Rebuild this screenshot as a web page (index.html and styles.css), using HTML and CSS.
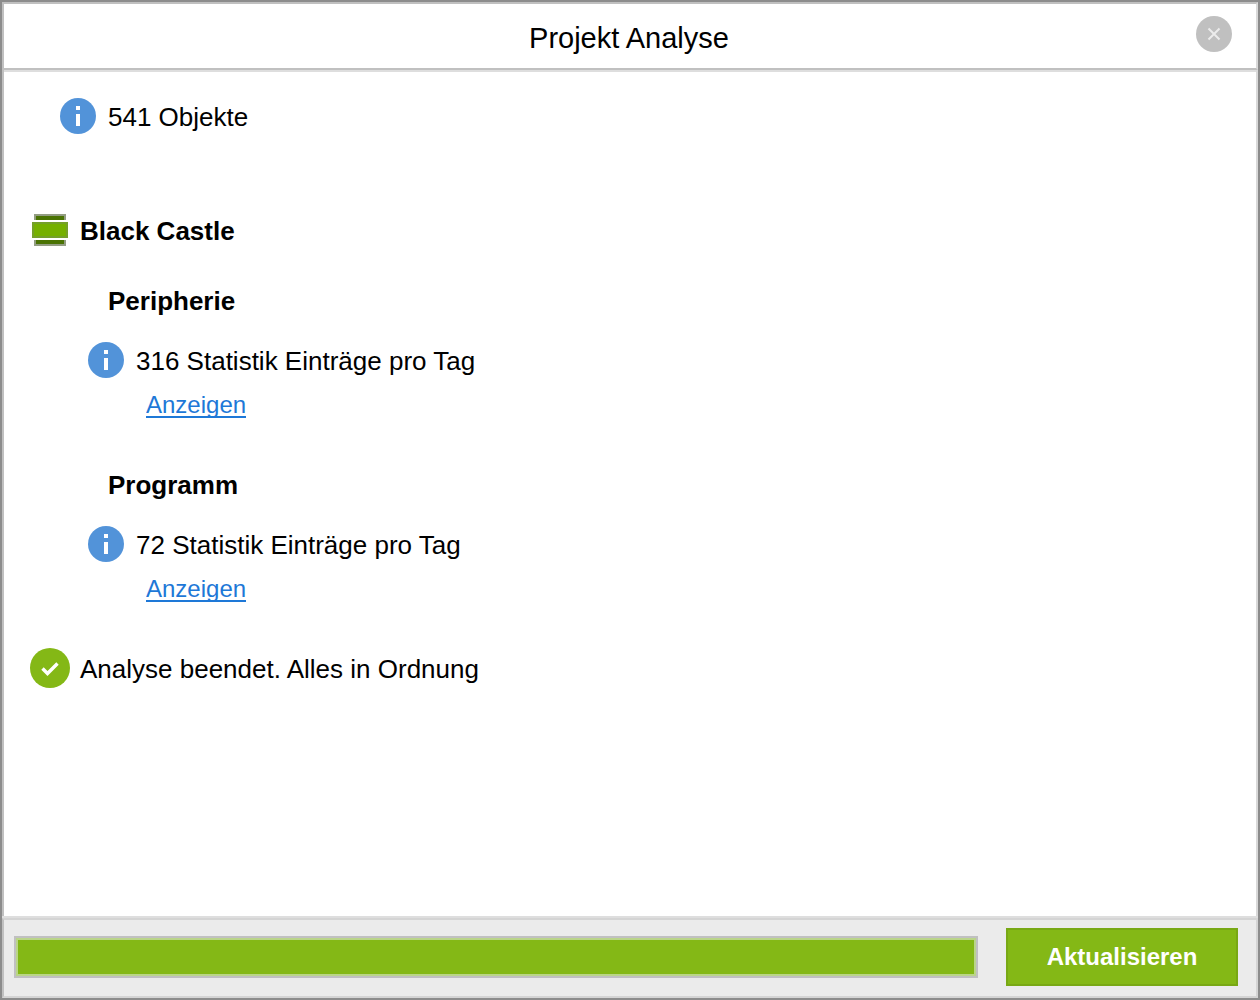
FILE: index.html
```html
<!DOCTYPE html>
<html lang="de">
<head>
    <meta charset="UTF-8">
    <meta name="viewport" content="width=device-width, initial-scale=1.0">
    <title>Projekt Analyse</title>
    <link rel="stylesheet" href="styles.css">
</head>
<body>
    <svg class="symbols" width="0" height="0" aria-hidden="true">
        <symbol id="info" viewBox="0 0 36 36">
            <circle cx="18" cy="18" r="18" fill="#5293d9"/>
            <path d="M16 8h4v4h-4zM16 16h4v12h-4z" fill="#fff"/>
        </symbol>
    </svg>

    <div class="window">
        <header class="titlebar">
            <h1>Projekt Analyse</h1>
            <button class="close" aria-label="Schließen">
                <svg width="36" height="36" viewBox="0 0 36 36">
                    <circle cx="18" cy="18" r="18" fill="#c0c0c0"/>
                    <path d="M12.5 12.5l11 11M23.5 12.5l-11 11" stroke="#ececec" stroke-width="2" fill="none"/>
                </svg>
            </button>
        </header>

        <main class="content">
            <p class="row total"><svg class="icon"><use href="#info"/></svg><span>541 Objekte</span></p>

            <h2 class="row project">
                <svg class="icon" viewBox="0 0 36 36">
                    <path d="M2 2h32v6H2zM2 28h32v6H2z" fill="#939d83"/>
                    <path d="M4 4h28v4H4zM4 28h28v4H4z" fill="#4a7303"/>
                    <path d="M0 10h36v16H0z" fill="#75a02a"/>
                    <path d="M2 12h32v12H2z" fill="#75b000"/>
                </svg>
                <span>Black Castle</span>
            </h2>

            <section class="group">
                <h3>Peripherie</h3>
                <p class="row"><svg class="icon"><use href="#info"/></svg><span>316 Statistik Einträge pro Tag</span></p>
                <a class="show" href="#">Anzeigen</a>
            </section>

            <section class="group">
                <h3>Programm</h3>
                <p class="row"><svg class="icon"><use href="#info"/></svg><span>72 Statistik Einträge pro Tag</span></p>
                <a class="show" href="#">Anzeigen</a>
            </section>

            <p class="row result">
                <svg class="icon-big" viewBox="0 0 40 40">
                    <circle cx="20" cy="20" r="20" fill="#84b816"/>
                    <path d="M12.5 20.5l5 5 10-10" stroke="#fff" stroke-width="3.4" fill="none"/>
                </svg>
                <span>Analyse beendet. Alles in Ordnung</span>
            </p>
        </main>

        <footer class="footer">
            <progress class="progress" value="100" max="100" aria-label="Fortschritt"></progress>
            <button class="refresh">Aktualisieren</button>
        </footer>
    </div>
</body>
</html>
```
FILE: styles.css
```css
* {
    box-sizing: border-box;
}
body {
    margin: 0;
    font-family: "Liberation Sans", Arial, sans-serif;
    font-size: 26px;
    line-height: 40px;
    color: #000;
    background-color: #fff;
}
h1, h2, h3, p {
    margin: 0;
    font-size: 26px;
}
.symbols {
    position: absolute;
}
.window {
    display: flex;
    flex-direction: column;
    min-height: 100vh;
    border: 2px solid #8c8c8c;
}
.titlebar {
    display: grid;
    grid-template-columns: 1fr auto 1fr;
    align-items: center;
    padding: 0 24px 4px 22px;
    height: 68px;
    border: 2px solid #c0c0c0;
    border-right-color: #d9d9d9;
    box-shadow: 0 2px 0 #dedede;
}
.titlebar h1 {
    grid-column: 2;
    padding-top: 8px;
    font-size: 29px;
    font-weight: normal;
}
.close {
    justify-self: end;
    width: 36px;
    height: 36px;
    padding: 0;
    border: none;
    background: none;
    cursor: pointer;
}
.close svg {
    display: block;
}
.content {
    flex: 1;
    padding: 25px 26px;
    border-left: 2px solid #c0c0c0;
    border-right: 2px solid #d9d9d9;
}
.row {
    display: flex;
    align-items: center;
    gap: 12px;
}
.row span {
    padding-top: 2px;
}
.icon {
    width: 36px;
    height: 36px;
}
.icon-big {
    width: 40px;
    height: 40px;
}
.total {
    margin: 0 0 72px 30px;
}
.project {
    margin: 0 0 28px 2px;
}
.group {
    margin: 0 0 45px 58px;
}
.group h3 {
    margin: 0 0 18px 20px;
    padding-top: 2px;
}
.show {
    display: block;
    width: fit-content;
    height: 28px;
    margin: 9px 0 0 58px;
    border-bottom: 2px solid #1e78d7;
    overflow: hidden;
    font-size: 24px;
    line-height: 30px;
    color: #1e78d7;
    text-decoration: none;
}
.result {
    gap: 10px;
}
.footer {
    display: flex;
    align-items: center;
    gap: 28px;
    padding: 8px 18px 10px 10px;
    background-color: #ebebeb;
    border: 2px solid #d4d4d4;
    border-left-color: #c0c0c0;
    box-shadow: 0 -2px 0 #dedede;
}
.progress {
    flex: 1;
    min-width: 0;
    height: 42px;
    padding: 2px;
    border: 2px solid #c0c0c0;
    background-color: #bad588;
    appearance: none;
}
.progress::-webkit-progress-bar {
    background-color: #bad588;
}
.progress::-webkit-progress-value {
    background-color: #84b816;
}
.refresh {
    min-width: 232px;
    height: 58px;
    padding: 0 36px;
    border: 2px solid #78a814;
    background-color: #84b816;
    color: #fff;
    font-family: inherit;
    font-size: 24px;
    font-weight: bold;
    cursor: pointer;
}
```
